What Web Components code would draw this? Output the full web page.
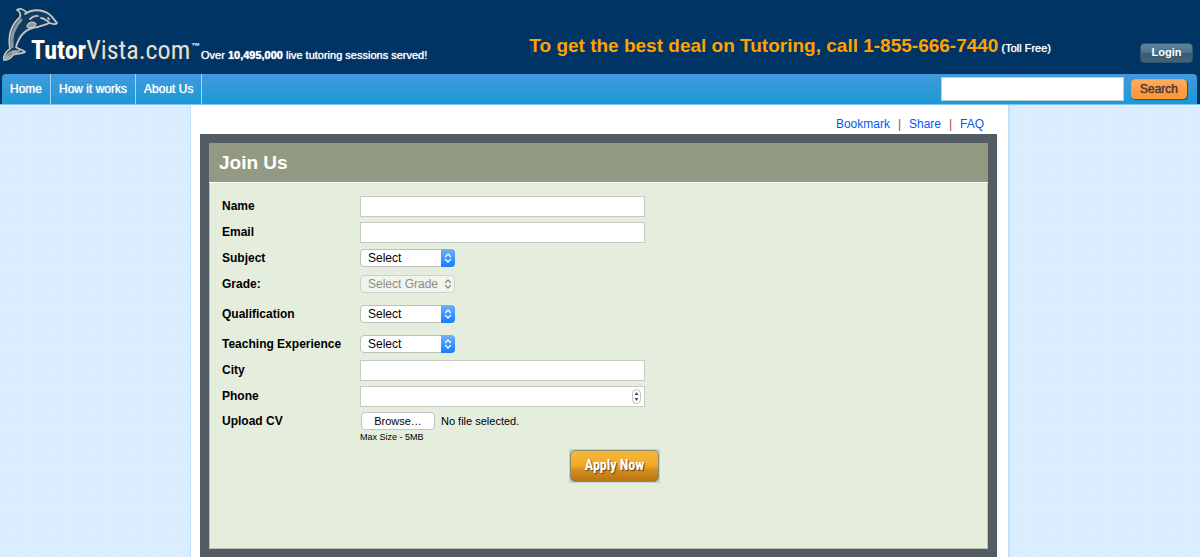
<!DOCTYPE html>
<html lang="en">
<head>
    <meta charset="UTF-8">
    <meta name="viewport" content="width=device-width, initial-scale=1.0">
    <title>TutorVista - Join Us</title>
    <style>
        body {
            margin: 0;
            min-height: 100vh;
            display: flex;
            flex-direction: column;
            background: #dbedff radial-gradient(#d2e9ff 1px, transparent 1px) 0 0 / 5px 5px;
            font: 12px/16px "Liberation Sans", Arial, sans-serif;
            color: #000;
        }
    </style>
</head>
<body>
    <site-header sessions="10,495,000" phone="1-855-666-7440"></site-header>
    <nav-bar>
        <nav-link href="#home">Home</nav-link>
        <nav-link href="#how">How it works</nav-link>
        <nav-link href="#about">About Us</nav-link>
    </nav-bar>
    <page-content>
        <quick-links slot="links"></quick-links>
        <form-panel titulo="Join Us">
            <text-field label="Name"></text-field>
            <text-field label="Email" type="email"></text-field>
            <select-field label="Subject" option="Select"></select-field>
            <select-field label="Grade:" option="Select Grade" disabled></select-field>
            <select-field class="spaced" label="Qualification" option="Select"></select-field>
            <select-field label="Teaching Experience" option="Select"></select-field>
            <text-field label="City"></text-field>
            <text-field label="Phone" type="number"></text-field>
            <file-field label="Upload CV" note="Max Size - 5MB"></file-field>
            <apply-button slot="action">Apply Now</apply-button>
        </form-panel>
    </page-content>

    <script>
        // Clones the template of the class into an open shadow root
        class BaseElement extends HTMLElement {
            constructor() {
                super();
                this.attachShadow({ mode: 'open' });
                this.shadowRoot.appendChild(this.constructor.template.content.cloneNode(true));
            }

            $(selector) {
                return this.shadowRoot.querySelector(selector);
            }
        }

        function template(html) {
            const element = document.createElement('template');
            element.innerHTML = html;
            return element;
        }

        // Label column and control column, shared by every field
        const fieldStyles = `
            :host { display: block; }
            :host(.spaced) { margin: 4px 0; }
            .field {
                display: grid;
                grid-template-columns: 138px minmax(0, 1fr);
                align-items: center;
                min-height: 26px;
            }
            label { font-weight: bold; }
            input, select, button {
                box-sizing: border-box;
                margin: 0;
                font: inherit;
            }
        `;

        class SiteHeader extends BaseElement {
            connectedCallback() {
                this.$('.sessions').textContent = this.getAttribute('sessions');
                this.$('.phone').textContent = this.getAttribute('phone');
            }
        }

        SiteHeader.template = template(/* html */ `
            <style>
                :host {
                    display: flex;
                    align-items: flex-end;
                    height: 74px;
                    background: #003464;
                    color: #fff;
                    font-size: 11px;
                }
                svg { display: block; width: 201px; height: 74px; flex: none; }
                .name {
                    font-family: "Liberation Sans Narrow", "Roboto Condensed", "Open Sans Condensed", "Liberation Sans", sans-serif;
                    text-shadow: 1px 1px 1px #34312e;
                }
                p { margin: 0; text-shadow: 0 0 1px #fff; }
                .served { padding-bottom: 11px; }
                .deal { margin-left: auto; padding-bottom: 14px; line-height: 24px; }
                .deal strong { font-size: 19px; color: #ffa200; text-shadow: none; }
                button {
                    width: 53px;
                    height: 20px;
                    margin: 0 7px 11px 89px;
                    padding: 0 0 2px;
                    border: 1px solid #33546b;
                    border-radius: 4px;
                    background: linear-gradient(#5b849e, #4a7189 50%, #365b72 51%, #43647a);
                    color: #fff;
                    font: bold 11px/16px "Liberation Sans", Arial, sans-serif;
                }
            </style>
            <svg viewBox="0 0 201 74" role="img" aria-label="TutorVista.com">
                <path d="M19 14C14 20 11 32 12 49" fill="none" stroke="#102438" stroke-width="3" opacity=".6"/>
                <g fill="#123b62" stroke="#c4c4c0" stroke-width="1.8" stroke-linejoin="round" stroke-linecap="round">
                    <path d="M25 14C31 9 42 9 49 14C53 17 54 20 57 23C56 25 52 24 49 23C46 25 42 25 38 27C26 28 19 36 16 47C17 49 22 49 25 52C22 54 17 53 13 55C11 58 8 60 4 60C3 56 6 51 10 49C8 37 11 25 20 17C21 13 19 11 17 10C20 8 24 9 27 13"/>
                    <path d="M12 47C11 37 14 27 21 20" stroke="#8e979c" stroke-width="3"/>
                    <path d="M28 24C31 21 34 22 36 24C34 28 30 28 27 27C27 25 28 25 28 24" fill="#8e979c" stroke-width="1.2"/>
                    <path d="M30 19C32 17 34 15 38 16M41 18C44 18 45 20 49 22M48 18L49 19"/>
                    <path d="M5 58C8 53 12 51 16 51M7 58C10 56 12 53 19 51" stroke="#a3a8a9" stroke-width="2.2"/>
                </g>
                <text class="name" x="31" y="59" font-size="26" fill="#fff"><tspan font-weight="bold">Tutor</tspan><tspan fill="#e2e1de">Vista.com</tspan></text>
                <text x="191" y="49" font-size="9" font-weight="bold" fill="#fff">™</text>
            </svg>
            <p class="served">Over <b class="sessions"></b> live tutoring sessions served!</p>
            <p class="deal"><strong>To get the best deal on Tutoring, call <span class="phone"></span></strong> (Toll Free)</p>
            <button type="button">Login</button>
        `);

        class NavBar extends BaseElement {}

        NavBar.template = template(/* html */ `
            <style>
                :host { display: block; background: #003464; }
                nav {
                    display: flex;
                    align-items: stretch;
                    height: 30px;
                    margin: 0 3px 0 2px;
                    border-radius: 4px 4px 0 0;
                    background: linear-gradient(#4299dd, #1c99d5);
                }
                .line { height: 1px; background: #7fc4f5; }
                form { display: flex; align-items: center; gap: 7px; margin-left: auto; padding-right: 10px; }
                input {
                    box-sizing: border-box;
                    width: 183px;
                    height: 24px;
                    margin: 0;
                    padding: 0 4px;
                    border: 1px solid #b9cfdd;
                    background: #fff;
                    font: inherit;
                }
                button {
                    width: 56px;
                    height: 20px;
                    padding: 0;
                    border: 1px solid #ff9d3c;
                    border-radius: 4px;
                    background: linear-gradient(#ffab5e, #fd9535);
                    box-shadow: 1px 1px 1px #24506e;
                    color: #4a3a33;
                    font: 12px/16px "Liberation Sans", Arial, sans-serif;
                    text-shadow: 0 0 1px #4a3a33;
                }
            </style>
            <nav>
                <slot></slot>
                <form role="search">
                    <input type="search" aria-label="Search">
                    <button type="button">Search</button>
                </form>
            </nav>
            <div class="line"></div>
        `);

        class NavLink extends BaseElement {
            connectedCallback() {
                this.$('a').href = this.getAttribute('href');
            }
        }

        NavLink.template = template(/* html */ `
            <style>
                :host { display: flex; border-right: 1px solid #a5d3f3; }
                a {
                    padding: 0 8px;
                    line-height: 30px;
                    color: #fff;
                    text-decoration: none;
                    text-shadow: 0 0 1px #fff;
                }
            </style>
            <a><slot></slot></a>
        `);

        class PageContent extends BaseElement {}

        PageContent.template = template(/* html */ `
            <style>
                :host { display: flex; flex: 1; justify-content: center; }
                main {
                    box-sizing: border-box;
                    display: flex;
                    flex-direction: column;
                    width: 100%;
                    max-width: 820px;
                    padding: 0 11px 0 9px;
                    border: solid #bfe1ff;
                    border-width: 0 2px 0 1px;
                    background: #fff;
                }
            </style>
            <main>
                <slot name="links"></slot>
                <slot></slot>
            </main>
        `);

        class QuickLinks extends BaseElement {}

        QuickLinks.template = template(/* html */ `
            <style>
                :host {
                    display: flex;
                    justify-content: flex-end;
                    padding: 11px 13px 2px 0;
                }
                a { color: #0857f0; text-decoration: none; }
                span { width: 19px; text-align: center; color: #a3522b; }
            </style>
            <a href="#bookmark">Bookmark</a><span>|</span><a href="#share">Share</a><span>|</span><a href="#faq">FAQ</a>
        `);

        class FormPanel extends BaseElement {
            connectedCallback() {
                this.$('h1').textContent = this.getAttribute('titulo');
            }
        }

        FormPanel.template = template(/* html */ `
            <style>
                :host {
                    display: flex;
                    flex: 1;
                    flex-direction: column;
                    border: solid #525c62;
                    border-width: 9px 9px 8px;
                    box-shadow: inset 0 0 0 1px #b9c2b0;
                    background: #e5eddd;
                }
                h1 {
                    margin: 0;
                    padding: 0 10px;
                    border-bottom: 1px solid #fff;
                    background: #939a83;
                    color: #fff;
                    font-size: 19px;
                    line-height: 39px;
                }
                form { padding: 10px 13px 64px; }
                footer { display: flex; padding: 8px 0 0 347px; }
            </style>
            <h1></h1>
            <form>
                <slot></slot>
                <footer><slot name="action"></slot></footer>
            </form>
        `);

        class TextField extends BaseElement {
            connectedCallback() {
                this.$('label').textContent = this.getAttribute('label');
                this.$('input').type = this.getAttribute('type') || 'text';
            }
        }

        TextField.template = template(/* html */ `
            <style>
                ${fieldStyles}
                .box { position: relative; width: 100%; max-width: 285px; display: flex; }
                input {
                    width: 100%;
                    height: 21px;
                    padding: 0 6px;
                    border: 1px solid #c6c9c4;
                    background: #fff;
                    appearance: textfield;
                }
                input::-webkit-inner-spin-button { display: none; }
                svg { display: none; position: absolute; top: 3px; right: 4px; }
                :host([type="number"]) svg { display: block; }
            </style>
            <div class="field">
                <label for="control"></label>
                <div class="box">
                    <input id="control">
                    <svg width="9" height="16" viewBox="0 0 9 16" aria-hidden="true">
                        <rect x=".5" y=".5" width="8" height="14" rx="4" fill="#fff" stroke="#bfbfbf"/>
                        <path d="M2.5 6l2-3 2 3zM2.5 9l2 3 2-3z" fill="#4d4d4d"/>
                    </svg>
                </div>
            </div>
        `);

        class SelectField extends BaseElement {
            connectedCallback() {
                this.$('label').textContent = this.getAttribute('label');
                this.$('option').textContent = this.getAttribute('option');
                this.$('select').disabled = this.hasAttribute('disabled');
            }
        }

        SelectField.template = template(/* html */ `
            <style>
                ${fieldStyles}
                .box { position: relative; width: 95px; display: flex; }
                select {
                    width: 100%;
                    height: 18px;
                    padding: 0 16px 0 7px;
                    border: 1px solid #bcbfb9;
                    border-radius: 4px;
                    background: #fff;
                    color: #000;
                    appearance: none;
                }
                .arrows {
                    position: absolute;
                    top: 0;
                    right: 0;
                    width: 14px;
                    height: 18px;
                    border-radius: 0 4px 4px 0;
                    background: linear-gradient(#6bb2fb, #167efb);
                    stroke: #fff;
                    pointer-events: none;
                }
                select:disabled { border-color: #cdd1c8; background: #f0f4ec; color: #8b8d89; opacity: 1; }
                select:disabled + .arrows { background: none; stroke: #8b8d89; }
            </style>
            <div class="field">
                <label for="control"></label>
                <div class="box">
                    <select id="control"><option></option></select>
                    <svg class="arrows" viewBox="0 0 14 18" fill="none" stroke-width="1.3" stroke-linecap="round" stroke-linejoin="round" aria-hidden="true">
                        <path d="M4.5 7.5L7 5l2.5 2.500M4.500 10.500L7 13l2.500-2.500"/>
                    </svg>
                </div>
            </div>
        `);

        class FileField extends BaseElement {
            connectedCallback() {
                this.$('label').textContent = this.getAttribute('label');
                this.$('small').textContent = this.getAttribute('note');
                this.$('button').addEventListener('click', () => this.$('input').click());
                this.$('input').addEventListener('change', (event) => {
                    const [file] = event.target.files;
                    this.$('output').textContent = file ? file.name : 'No file selected.';
                });
            }
        }

        FileField.template = template(/* html */ `
            <style>
                ${fieldStyles}
                .field { min-height: 24px; }
                .box { display: flex; align-items: center; gap: 6px; padding-left: 1px; font-size: 11px; }
                button {
                    width: 74px;
                    height: 18px;
                    padding: 0;
                    border: 1px solid #c2c5bf;
                    border-radius: 4px;
                    background: #fff;
                    color: #000;
                }
                small { display: block; margin-left: 138px; font-size: 9px; line-height: 8px; }
            </style>
            <div class="field">
                <label for="control"></label>
                <div class="box">
                    <input id="control" type="file" hidden>
                    <button type="button">Browse…</button>
                    <output for="control">No file selected.</output>
                </div>
            </div>
            <small></small>
        `);

        class ApplyButton extends BaseElement {}

        ApplyButton.template = template(/* html */ `
            <style>
                :host { display: block; padding: 1px; background: #bdd3da; }
                button {
                    display: block;
                    width: 89px;
                    height: 32px;
                    padding: 0 0 2px;
                    border: 1px solid #8d8c6e;
                    border-radius: 5px;
                    background: linear-gradient(#f5b83c, #f2aa27 45%, #d28b1c 65%, #b87512);
                    color: #fff;
                    font: bold 14px/16px "Liberation Sans Narrow", "Roboto Condensed", "Open Sans Condensed", "Liberation Sans", sans-serif;
                    text-shadow: 1px 1px 1px #5e4215;
                }
            </style>
            <button type="button"><slot></slot></button>
        `);

        customElements.define('site-header', SiteHeader);
        customElements.define('nav-bar', NavBar);
        customElements.define('nav-link', NavLink);
        customElements.define('page-content', PageContent);
        customElements.define('quick-links', QuickLinks);
        customElements.define('form-panel', FormPanel);
        customElements.define('text-field', TextField);
        customElements.define('select-field', SelectField);
        customElements.define('file-field', FileField);
        customElements.define('apply-button', ApplyButton);
    </script>
</body>
</html>
